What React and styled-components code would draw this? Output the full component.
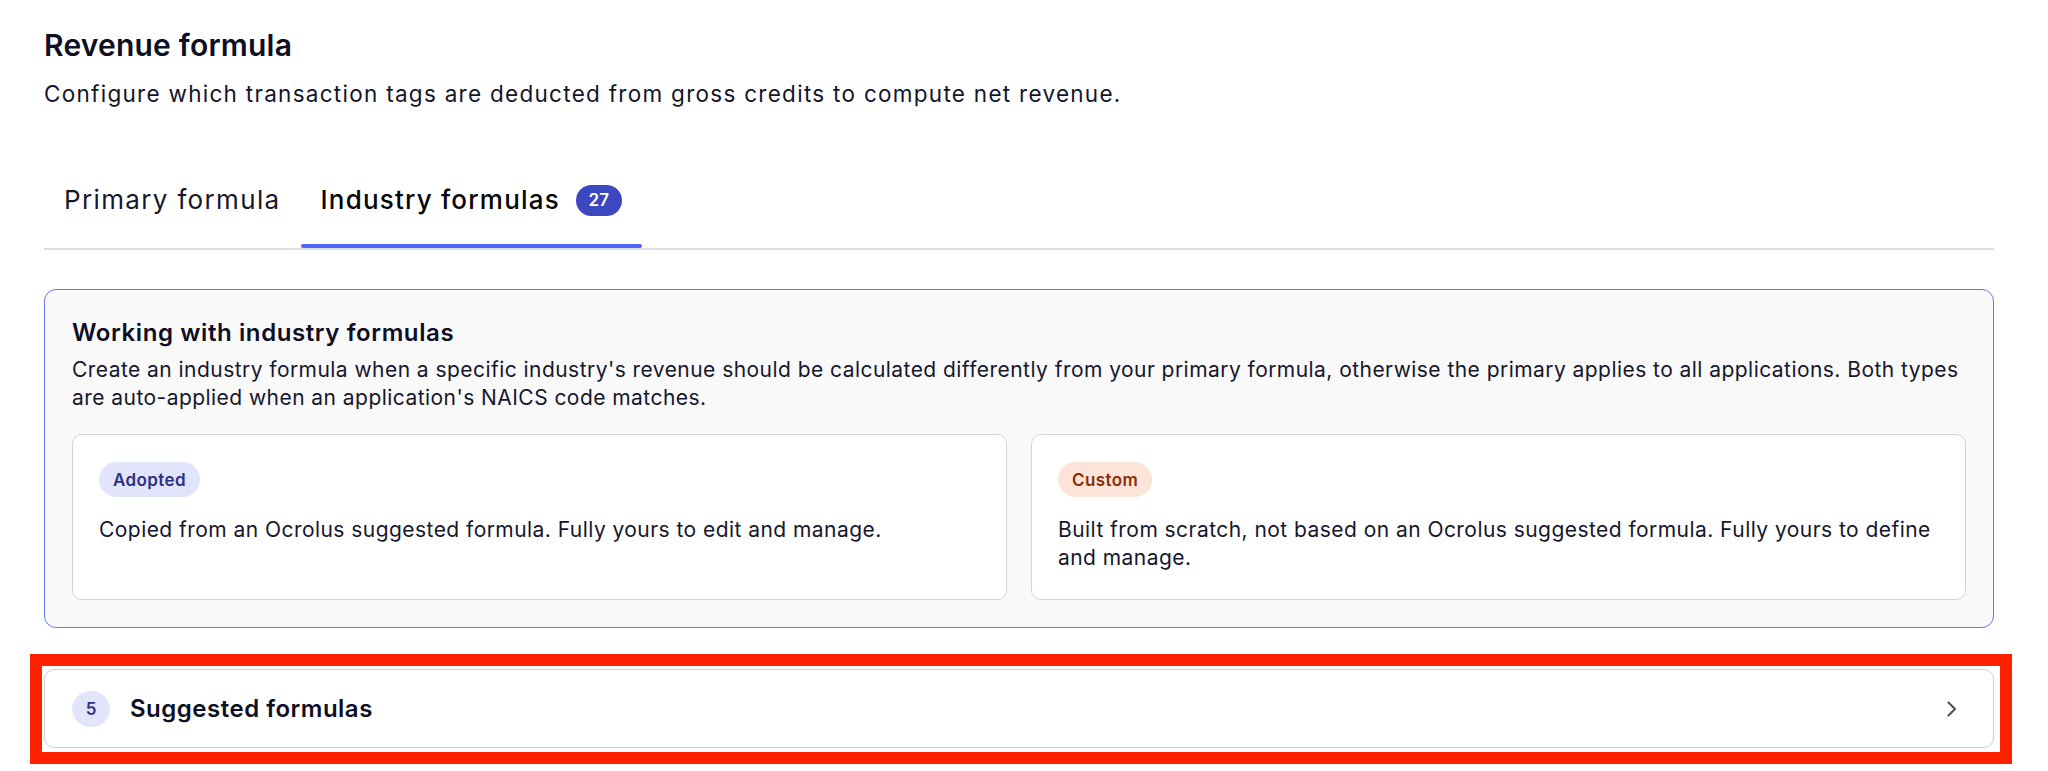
import React from "react";
import styled, { createGlobalStyle } from "styled-components";

const GlobalStyle = createGlobalStyle`
  * { box-sizing: border-box; }
  body {
    margin: 0;
    background: #ffffff;
    font-family: Inter, "Noto Sans", sans-serif;
    color: #121329;
  }
`;

const Page = styled.div`
  width: 1950px;
  margin-left: 44px;
  padding-top: 27px;
`;

const Title = styled.h1`
  margin: 0;
  font-size: 30px;
  line-height: 36px;
  font-weight: 600;
  letter-spacing: 0.2px;
  color: #0e0f24;
`;

const Subtitle = styled.p`
  margin: 17px 0 0;
  font-size: 22.5px;
  line-height: 28px;
  letter-spacing: 1.28px;
  color: #14152b;
`;

const TabList = styled.div`
  display: flex;
  margin-top: 76px;
  border-bottom: 2px solid #dedede;
`;

const Tab = styled.div`
  position: relative;
  display: flex;
  align-items: center;
  gap: 16px;
  padding: 0 20px 32px;
  font-size: 26px;
  line-height: 32px;
  letter-spacing: ${(p) => (p.$active ? "1.2px" : "1.35px")};
  font-weight: ${(p) => (p.$active ? 500 : 400)};
  color: ${(p) => (p.$active ? "#050505" : "#16172c")};
  cursor: pointer;

  &::after {
    content: "";
    display: ${(p) => (p.$active ? "block" : "none")};
    position: absolute;
    left: 0;
    right: 0;
    bottom: 0;
    height: 4px;
    border-radius: 2px;
    background: #5266f4;
  }
`;

const CountPill = styled.span`
  display: inline-flex;
  align-items: center;
  justify-content: center;
  min-width: 46px;
  height: 31px;
  padding: 0 12px;
  border-radius: 16px;
  background: #3b48c0;
  color: #ffffff;
  font-size: 17px;
  font-weight: 600;
  letter-spacing: 0.3px;
`;

const InfoBox = styled.section`
  margin-top: 39px;
  padding: 28px 27px 27px;
  border: 1.5px solid #6476f2;
  border-radius: 12px;
  background: #f9f9fa;
`;

const InfoHeading = styled.h2`
  margin: 0;
  font-size: 24px;
  line-height: 30px;
  font-weight: 600;
  letter-spacing: 0.6px;
  color: #0e0f24;
`;

const BodyText = styled.p`
  margin: ${(p) => p.$gap || 0}px 0 0;
  font-size: 21px;
  line-height: 28px;
  letter-spacing: 0.45px;
  color: #16172c;
`;

const TypeGrid = styled.div`
  display: grid;
  grid-template-columns: 1fr 1fr;
  gap: 24px;
  margin-top: 22px;
`;

const TypeCard = styled.div`
  padding: 27px 26px;
  border: 1.5px solid #d4d4d8;
  border-radius: 10px;
  background: #ffffff;
`;

const badgeTones = {
  adopted: { bg: "#e1e4fb", fg: "#2b3286" },
  custom: { bg: "#fde4d9", fg: "#8b2c07" },
};

const TypeBadge = styled.span`
  display: inline-flex;
  align-items: center;
  height: 35px;
  padding: 0 14px;
  border-radius: 18px;
  background: ${(p) => badgeTones[p.$tone].bg};
  color: ${(p) => badgeTones[p.$tone].fg};
  font-size: 17px;
  font-weight: 600;
  letter-spacing: 0.4px;
`;

const Highlight = styled.div`
  margin: 26px -18px 0 -14px;
  padding: 3px 6px 4px 2px;
  border: 12px solid #ff2200;
`;

const SectionRow = styled.div`
  display: flex;
  align-items: center;
  gap: 20px;
  height: 79px;
  padding: 0 34px 0 27px;
  border: 1.5px solid #cfcfd4;
  border-radius: 10px;
  background: #ffffff;
  cursor: pointer;
`;

const RowCount = styled.span`
  display: inline-flex;
  align-items: center;
  justify-content: center;
  width: 38px;
  height: 36px;
  border-radius: 50%;
  background: #e1e4fb;
  color: #2b3286;
  font-size: 17px;
  font-weight: 600;
`;

const RowTitle = styled.span`
  flex: 1;
  font-size: 24px;
  font-weight: 600;
  letter-spacing: 0.5px;
  color: #0e0f24;
`;

const Chevron = () => (
  <svg width="14" height="18" viewBox="0 0 14 18" fill="none">
    <path
      d="M3.5 2.5 L10 9 L3.5 15.5"
      stroke="#55565e"
      strokeWidth="2.2"
      strokeLinecap="round"
      strokeLinejoin="round"
    />
  </svg>
);

const formulaTypes = [
  {
    tone: "adopted",
    label: "Adopted",
    text: "Copied from an Ocrolus suggested formula. Fully yours to edit and manage.",
  },
  {
    tone: "custom",
    label: "Custom",
    text: "Built from scratch, not based on an Ocrolus suggested formula. Fully yours to define and manage.",
  },
];

export default function App() {
  return (
    <>
      <GlobalStyle />
      <Page>
        <Title>Revenue formula</Title>
        <Subtitle>
          Configure which transaction tags are deducted from gross credits to
          compute net revenue.
        </Subtitle>

        <TabList>
          <Tab>Primary formula</Tab>
          <Tab $active>
            Industry formulas <CountPill>27</CountPill>
          </Tab>
        </TabList>

        <InfoBox>
          <InfoHeading>Working with industry formulas</InfoHeading>
          <BodyText $gap={8}>
            Create an industry formula when a specific industry's revenue should
            be calculated differently from your primary formula, otherwise the
            primary applies to all applications. Both types are auto-applied
            when an application's NAICS code matches.
          </BodyText>
          <TypeGrid>
            {formulaTypes.map((t) => (
              <TypeCard key={t.tone}>
                <TypeBadge $tone={t.tone}>{t.label}</TypeBadge>
                <BodyText $gap={19}>{t.text}</BodyText>
              </TypeCard>
            ))}
          </TypeGrid>
        </InfoBox>

        <Highlight>
          <SectionRow>
            <RowCount>5</RowCount>
            <RowTitle>Suggested formulas</RowTitle>
            <Chevron />
          </SectionRow>
        </Highlight>
      </Page>
    </>
  );
}
